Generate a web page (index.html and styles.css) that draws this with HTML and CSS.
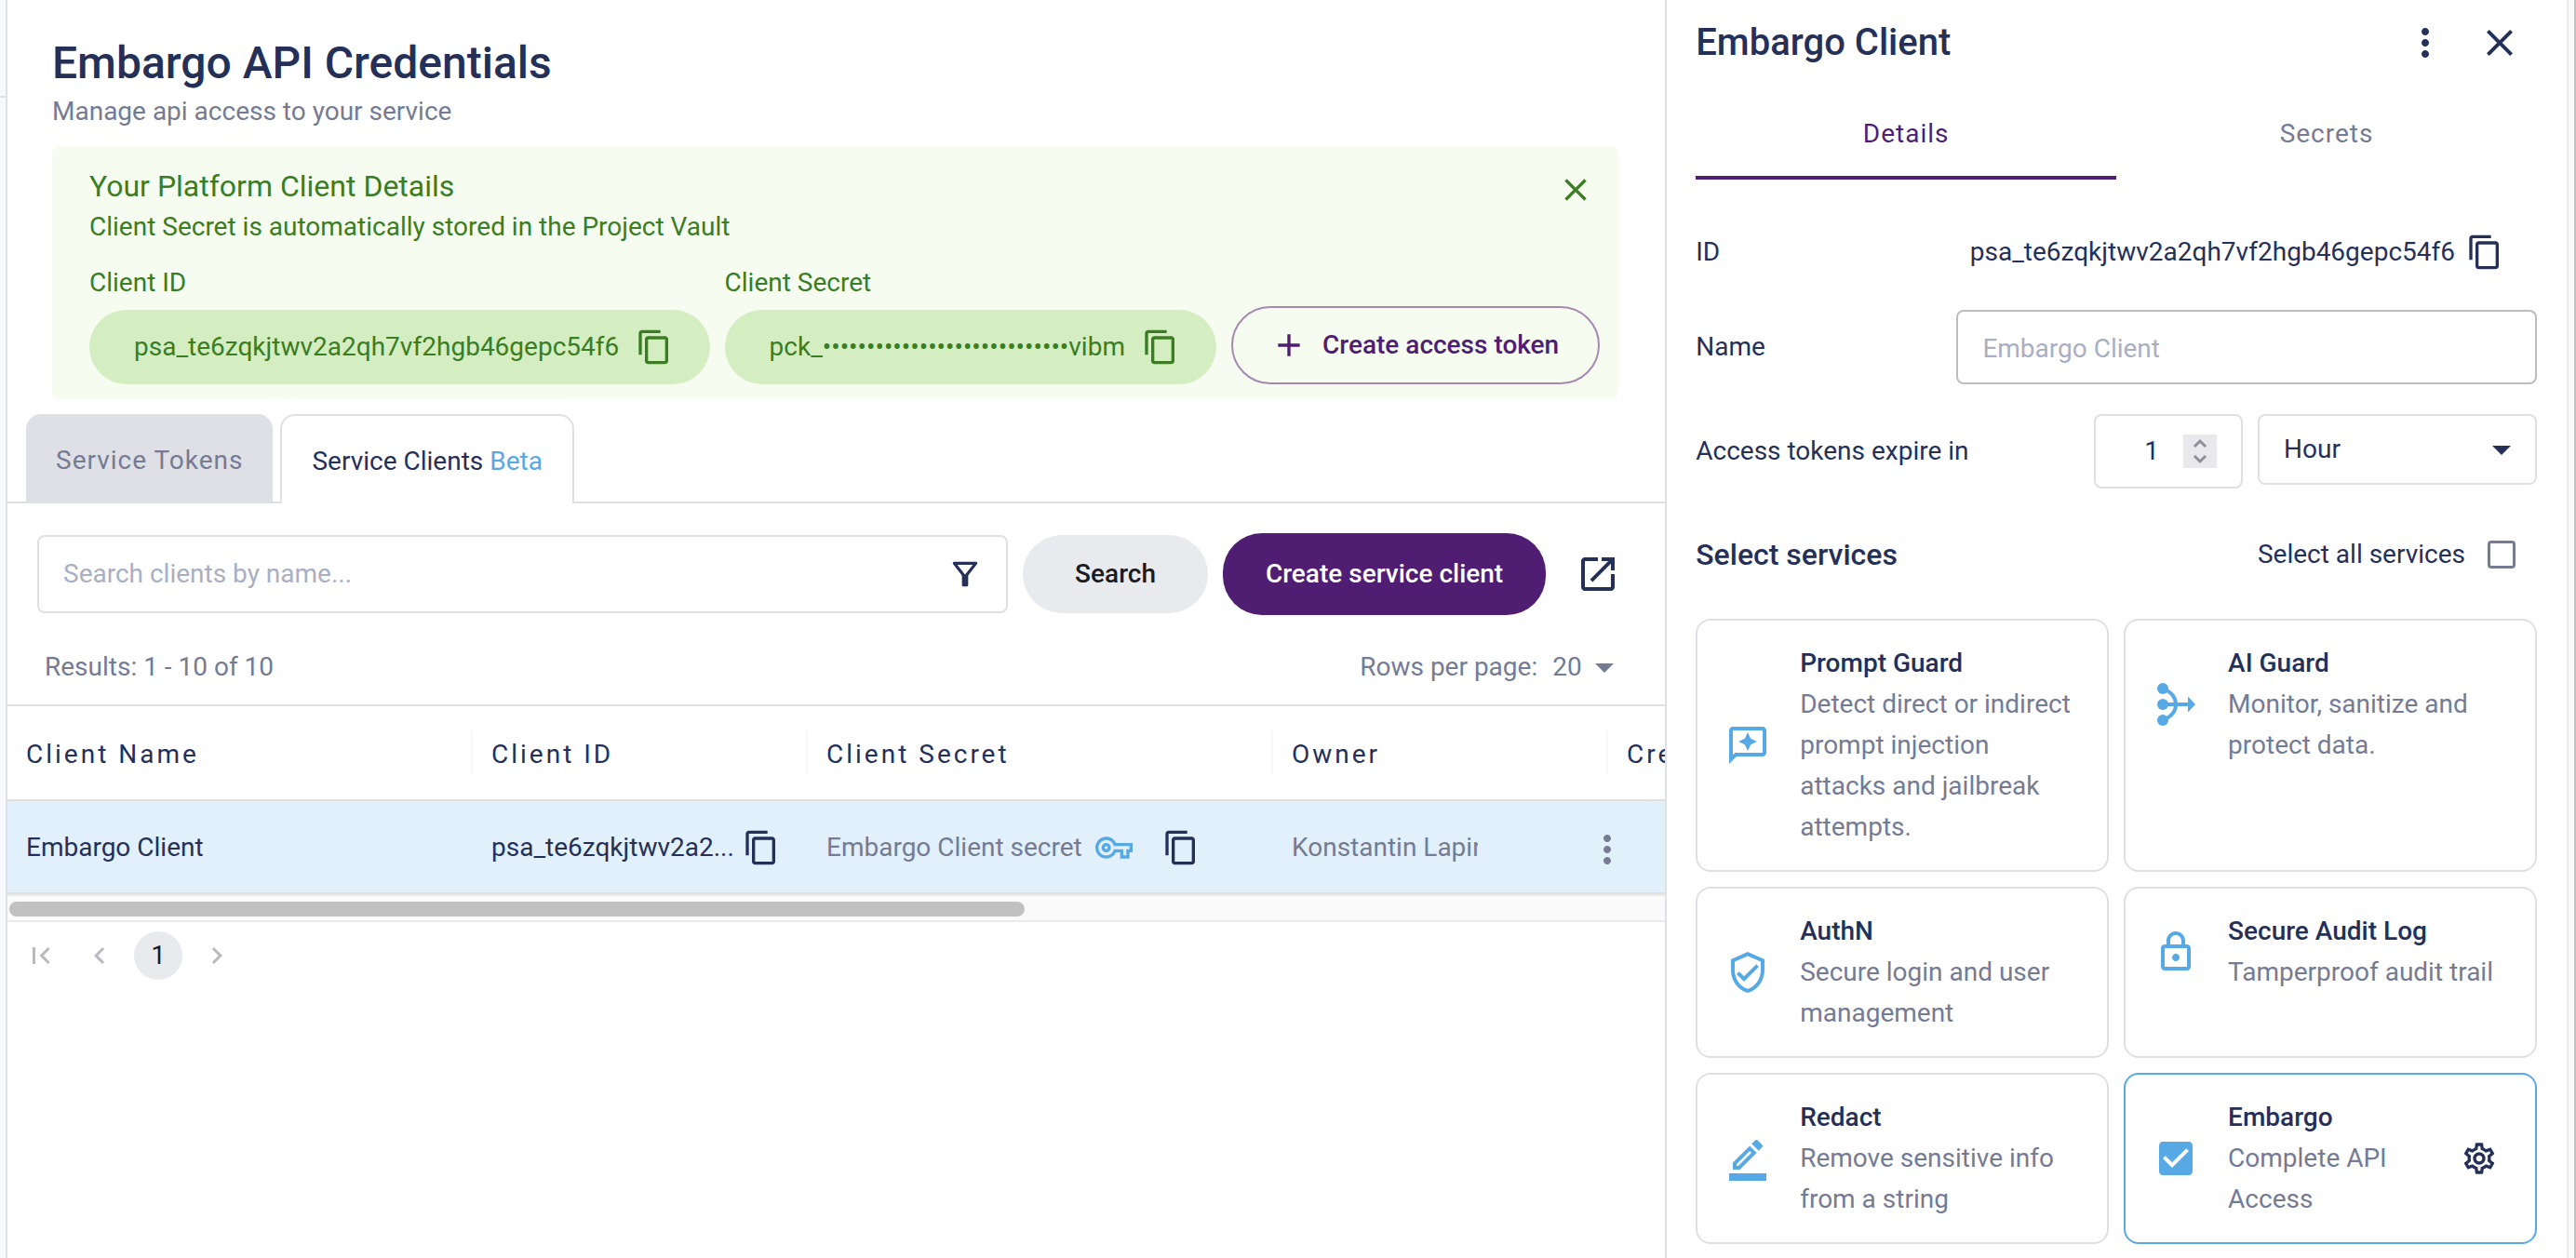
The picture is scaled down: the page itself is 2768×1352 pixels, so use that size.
FILE: index.html
```html
<!DOCTYPE html>
<html lang="en">
<head>
    <meta charset="UTF-8">
    <title>Embargo API Credentials</title>
    <link rel="stylesheet" href="styles.css">
</head>
<body>
<svg class="sprite" aria-hidden="true">
    <symbol id="copy" viewBox="0 0 24 24"><path d="M16 1H4c-1.100 0-2 .9-2 2v14h2V3h12V1zm3 4H8c-1.100 0-2 .9-2 2v14c0 1.100.9 2 2 2h11c1.100 0 2-.9 2-2V7c0-1.100-.9-2-2-2zm0 16H8V7h11v14z"/></symbol>
    <symbol id="close" viewBox="0 0 24 24"><path d="M19 6.410 17.590 5 12 10.590 6.410 5 5 6.410 10.590 12 5 17.590 6.410 19 12 13.410 17.590 19 19 17.590 13.410 12z"/></symbol>
    <symbol id="more" viewBox="0 0 24 24"><path d="M12 8c1.100 0 2-.9 2-2s-.9-2-2-2-2 .9-2 2 .9 2 2 2zm0 2c-1.100 0-2 .9-2 2s.9 2 2 2 2-.9 2-2-.9-2-2-2zm0 6c-1.100 0-2 .9-2 2s.9 2 2 2 2-.9 2-2-.9-2-2-2z"/></symbol>
    <symbol id="drop" viewBox="0 0 24 24"><path d="m7 10 5 5 5-5z"/></symbol>
</svg>

<div class="app">
    <aside class="rail"></aside>

    <main class="main">
        <header class="page-head">
            <h1>Embargo API Credentials</h1>
            <p>Manage api access to your service</p>
        </header>

        <section class="banner">
            <div class="banner-top">
                <div>
                    <h2>Your Platform Client Details</h2>
                    <p>Client Secret is automatically stored in the Project Vault</p>
                </div>
                <button class="icon-btn" aria-label="Close"><svg class="icon"><use href="#close"/></svg></button>
            </div>
            <div class="banner-fields">
                <div class="field">
                    <span class="field-name">Client ID</span>
                    <div class="pill">
                        <span>psa_te6zqkjtwv2a2qh7vf2hgb46gepc54f6</span>
                        <button class="icon-btn" aria-label="Copy client ID"><svg class="icon"><use href="#copy"/></svg></button>
                    </div>
                </div>
                <div class="field field-secret">
                    <span class="field-name">Client Secret</span>
                    <div class="pill">
                        <span>pck_••••••••••••••••••••••••••••vibm</span>
                        <button class="icon-btn" aria-label="Copy client secret"><svg class="icon"><use href="#copy"/></svg></button>
                    </div>
                </div>
                <button class="btn btn-outline">
                    <svg class="icon" viewBox="0 0 24 24"><path d="M19 13h-6v6h-2v-6H5v-2h6V5h2v6h6v2z"/></svg>
                    Create access token
                </button>
            </div>
        </section>

        <nav class="tabs">
            <button class="tab">Service Tokens</button>
            <button class="tab tab-active">Service Clients <span class="beta">Beta</span></button>
        </nav>

        <div class="toolbar">
            <div class="search">
                <input type="text" placeholder="Search clients by name..." aria-label="Search clients by name">
                <button class="icon-btn" aria-label="Filter">
                    <svg class="icon" viewBox="0 0 24 24"><path d="M7 6h10l-5.010 6.300L7 6zm-2.750-.390C6.270 8.200 10 13 10 13v6c0 .550.450 1 1 1h2c.550 0 1-.450 1-1v-6s3.720-4.800 5.740-7.390A.998.998 0 0 0 18.950 4H5.040c-.830 0-1.300.950-.790 1.610z"/></svg>
                </button>
            </div>
            <button class="btn btn-grey">Search</button>
            <button class="btn btn-primary">Create service client</button>
            <button class="icon-btn open-btn" aria-label="Open docs">
                <svg class="icon icon-lg" viewBox="0 0 24 24"><path d="M19 19H5V5h7V3H5c-1.110 0-2 .9-2 2v14c0 1.100.890 2 2 2h14c1.100 0 2-.9 2-2v-7h-2v7zM14 3v2h3.590l-9.830 9.830 1.410 1.410L19 6.410V10h2V3h-7z"/></svg>
            </button>
        </div>

        <div class="results">
            <span>Results: 1 - 10 of 10</span>
            <label class="rows">Rows per page:
                <span class="rows-select">
                    <select><option>20</option></select>
                    <svg class="icon icon-lg"><use href="#drop"/></svg>
                </span>
            </label>
        </div>

        <div class="grid">
            <table>
                <colgroup>
                    <col class="col-name"><col class="col-id"><col class="col-secret"><col class="col-owner"><col class="col-created">
                </colgroup>
                <thead>
                <tr>
                    <th><div>Client Name</div></th>
                    <th><div>Client ID</div></th>
                    <th><div>Client Secret</div></th>
                    <th><div>Owner</div></th>
                    <th><div>Created</div></th>
                </tr>
                </thead>
                <tbody>
                <tr>
                    <td class="dark">Embargo Client</td>
                    <td class="dark">
                        <div class="cell">
                            <span class="cell-id">psa_te6zqkjtwv2a2...</span>
                            <button class="icon-btn" aria-label="Copy"><svg class="icon"><use href="#copy"/></svg></button>
                        </div>
                    </td>
                    <td>
                        <div class="cell">
                            <span>Embargo Client secret</span>
                            <svg class="icon icon-key" viewBox="0 0 24 24"><path d="M22 19h-6v-4h-2.680c-1.140 2.420-3.600 4-6.320 4-3.860 0-7-3.140-7-7s3.140-7 7-7c2.720 0 5.170 1.580 6.320 4H24v6h-2v4zm-4-2h2v-4h2v-2H11.940l-.230-.670C11.010 8.340 9.110 7 7 7c-2.760 0-5 2.240-5 5s2.240 5 5 5c2.110 0 4.010-1.340 4.710-3.330l.230-.670H18v4zM7 15c-1.650 0-3-1.350-3-3s1.350-3 3-3 3 1.350 3 3-1.350 3-3 3zm0-4c-.550 0-1 .450-1 1s.450 1 1 1 1-.450 1-1-.450-1-1-1z"/></svg>
                            <button class="icon-btn navy" aria-label="Copy secret"><svg class="icon"><use href="#copy"/></svg></button>
                        </div>
                    </td>
                    <td><div class="owner">Konstantin Lapin</div></td>
                    <td></td>
                </tr>
                </tbody>
            </table>
            <button class="icon-btn row-menu" aria-label="Row actions"><svg class="icon icon-lg"><use href="#more"/></svg></button>
        </div>
        <div class="scroll"><div class="scroll-thumb"></div></div>

        <nav class="pager">
            <button aria-label="First page"><svg class="icon pager-icon" viewBox="0 0 24 24"><path d="M18.410 16.590 13.820 12l4.590-4.590L17 6l-6 6 6 6zM6 6h2v12H6z"/></svg></button>
            <button aria-label="Previous page"><svg class="icon pager-icon" viewBox="0 0 24 24"><path d="M15.410 7.410 14 6l-6 6 6 6 1.410-1.410L10.830 12z"/></svg></button>
            <button class="page-num">1</button>
            <button aria-label="Next page"><svg class="icon pager-icon" viewBox="0 0 24 24"><path d="M10 6 8.590 7.410 13.170 12l-4.580 4.590L10 18l6-6z"/></svg></button>
        </nav>
    </main>

    <aside class="drawer">
        <header class="drawer-head">
            <h2>Embargo Client</h2>
            <button class="icon-btn" aria-label="More"><svg class="icon icon-lg"><use href="#more"/></svg></button>
            <button class="icon-btn" aria-label="Close panel"><svg class="icon icon-lg"><use href="#close"/></svg></button>
        </header>

        <nav class="drawer-tabs">
            <button class="drawer-tab drawer-tab-active">Details</button>
            <button class="drawer-tab">Secrets</button>
        </nav>

        <div class="row row-id">
            <span>ID</span>
            <div class="id-value">
                <span>psa_te6zqkjtwv2a2qh7vf2hgb46gepc54f6</span>
                <button class="icon-btn" aria-label="Copy ID"><svg class="icon"><use href="#copy"/></svg></button>
            </div>
        </div>
        <div class="row">
            <label for="name">Name</label>
            <input class="name-input" id="name" type="text" placeholder="Embargo Client">
        </div>
        <div class="row">
            <label for="expire">Access tokens expire in</label>
            <div class="expire">
                <div class="number">
                    <input id="expire" type="text" inputmode="numeric" value="1">
                    <span class="spinner">
                        <svg viewBox="0 0 36 36"><path d="M12 13l6-6 6 6M12 23l6 6 6-6"/></svg>
                    </span>
                </div>
                <div class="unit">
                    <select aria-label="Unit"><option>Hour</option></select>
                    <svg class="icon icon-lg"><use href="#drop"/></svg>
                </div>
            </div>
        </div>

        <div class="services-head">
            <h3>Select services</h3>
            <label>Select all services <input type="checkbox"></label>
        </div>

        <div class="services">
            <article class="card">
                <div class="card-body">
                    <svg class="icon icon-lg" viewBox="0 0 24 24"><path d="M20 2H4c-1.100 0-2 .9-2 2v18l4-4h14c1.100 0 2-.9 2-2V4c0-1.100-.9-2-2-2zm0 14H5.170L4 17.170V4h16v12zM12 15l1.570-3.430L17 10l-3.430-1.570L12 5l-1.570 3.430L7 10l3.430 1.570z"/></svg>
                    <div class="card-text"><h4>Prompt Guard</h4><p>Detect direct or indirect prompt injection attacks and jailbreak attempts.</p></div>
                </div>
            </article>
            <article class="card">
                <div class="card-body">
                    <svg class="icon icon-lg" viewBox="0 0 24 24"><g fill="none" stroke="currentColor" stroke-width="2"><path d="M5 3.500c5 2 7 5 7 8.500s-2 6.500-7 8.500M5 12h14"/></g><circle cx="5" cy="3.500" r="3"/><circle cx="5" cy="12" r="3"/><circle cx="5" cy="20.500" r="3"/><path d="M18.500 7.700 22.500 12l-4 4.300z"/></svg>
                    <div class="card-text"><h4>AI Guard</h4><p>Monitor, sanitize and protect data.</p></div>
                </div>
            </article>
            <article class="card">
                <div class="card-body">
                    <svg class="icon icon-lg" viewBox="0 0 24 24"><path d="M12 1 3 5v6c0 5.550 3.840 10.740 9 12 5.160-1.260 9-6.450 9-12V5l-9-4zm7 10c0 4.520-2.980 8.690-7 9.930-4.020-1.240-7-5.410-7-9.930V6.300l7-3.110 7 3.110V11zm-11.590.590L6 13l4 4 8-8-1.410-1.420L10 14.170z"/></svg>
                    <div class="card-text"><h4>AuthN</h4><p>Secure login and user management</p></div>
                </div>
            </article>
            <article class="card">
                <div class="card-body">
                    <svg class="icon icon-lg" viewBox="0 0 24 24"><path d="M18 8h-1V6c0-2.760-2.240-5-5-5S7 3.240 7 6v2H6c-1.100 0-2 .9-2 2v10c0 1.100.9 2 2 2h12c1.100 0 2-.9 2-2V10c0-1.100-.9-2-2-2zM9 6c0-1.660 1.340-3 3-3s3 1.340 3 3v2H9V6zm9 14H6V10h12v10zm-6-3c1.100 0 2-.9 2-2s-.9-2-2-2-2 .9-2 2 .9 2 2 2z"/></svg>
                    <div class="card-text"><h4>Secure Audit Log</h4><p>Tamperproof audit trail</p></div>
                </div>
            </article>
            <article class="card">
                <div class="card-body">
                    <svg class="icon icon-lg" viewBox="0 0 24 24"><path d="M16.810 8.940l-3.750-3.750L4 14.250V18h3.750l9.060-9.060zM6 16v-.920l7.060-7.060.920.920L6.920 16H6zM19.710 6.040a.996.996 0 0 0 0-1.410l-2.340-2.340a1 1 0 0 0-1.410 0l-1.830 1.830 3.750 3.750 1.830-1.830zM2 20h20v4H2z"/></svg>
                    <div class="card-text"><h4>Redact</h4><p>Remove sensitive info from a string</p></div>
                </div>
            </article>
            <article class="card card-selected">
                <div class="card-body">
                    <svg class="icon icon-lg" viewBox="0 0 24 24"><path d="M19 3H5c-1.110 0-2 .9-2 2v14c0 1.100.890 2 2 2h14c1.110 0 2-.9 2-2V5c0-1.100-.890-2-2-2zm-9 14-5-5 1.410-1.410L10 14.170l7.590-7.590L19 8l-9 9z"/></svg>
                    <div class="card-text"><h4>Embargo</h4><p>Complete API Access</p></div>
                    <button class="icon-btn gear" aria-label="Service settings">
                        <svg class="icon" viewBox="0 0 24 24"><path d="M19.430 12.980c.040-.320.070-.640.070-.980s-.030-.660-.070-.980l2.110-1.650c.190-.150.240-.420.120-.640l-2-3.460c-.090-.160-.260-.250-.440-.250-.060 0-.120.010-.170.030l-2.490 1c-.520-.400-1.080-.730-1.690-.980l-.380-2.650C14.460 2.180 14.250 2 14 2h-4c-.250 0-.460.180-.490.420l-.380 2.650c-.610.250-1.170.590-1.690.980l-2.490-1c-.060-.020-.120-.030-.180-.030-.170 0-.340.090-.430.250l-2 3.460c-.130.220-.070.490.120.640l2.110 1.650c-.040.320-.070.650-.070.980s.030.660.070.980l-2.110 1.650c-.190.150-.240.420-.120.640l2 3.460c.090.160.260.250.440.250.060 0 .120-.010.170-.030l2.490-1c.520.400 1.080.730 1.690.980l.380 2.650c.030.240.240.420.490.420h4c.250 0 .460-.180.490-.420l.380-2.650c.610-.250 1.170-.590 1.690-.980l2.490 1c.060.020.120.030.180.030.170 0 .340-.090.430-.250l2-3.460c.120-.220.070-.490-.120-.640l-2.110-1.650zm-1.980-1.710c.040.310.050.520.050.730s-.020.430-.050.730l-.140 1.130.890.700 1.080.840-.700 1.210-1.270-.510-1.040-.420-.900.680c-.430.320-.840.560-1.250.730l-1.060.430-.160 1.130-.200 1.350h-1.400l-.190-1.350-.160-1.130-1.060-.430c-.430-.180-.830-.410-1.230-.710l-.910-.700-1.060.430-1.270.510-.700-1.210 1.080-.840.890-.700-.140-1.130c-.030-.310-.050-.540-.050-.740s.020-.430.050-.730l.140-1.130-.890-.700-1.080-.840.700-1.210 1.270.510 1.040.420.900-.680c.430-.320.840-.560 1.250-.730l1.060-.430.160-1.130.200-1.350h1.390l.190 1.350.160 1.130 1.060.430c.430.180.830.410 1.230.710l.910.700 1.060-.430 1.270-.510.700 1.210-1.070.850-.890.700.140 1.130zM12 8c-2.210 0-4 1.790-4 4s1.790 4 4 4 4-1.790 4-4-1.790-4-4-4zm0 6c-1.100 0-2-.900-2-2s.900-2 2-2 2 .900 2 2-.900 2-2 2z"/></svg>
                    </button>
                </div>
            </article>
        </div>
    </aside>
    <div class="page-scroll"></div>
</div>
</body>
</html>
```
FILE: styles.css
```css
:root {
    --navy: #253058;
    --grey: #747b93;
    --placeholder: #a9afc3;
    --border: #dfe0e5;
    --green: #3a7d22;
    --green-bg: #f6fcf0;
    --green-pill: #d4eec1;
    --purple: #4f1d71;
    --blue: #56a9e5;
}

* {
    box-sizing: border-box;
}

body {
    margin: 0;
    font-family: Roboto, 'Liberation Sans', sans-serif;
    font-size: 28px;
    line-height: 44px;
    color: var(--navy);
    background: #fff;
}

h1, h2, h3, h4, p {
    margin: 0;
    font-weight: 500;
}

h4 {
    font-size: 28px;
}

p {
    font-weight: 400;
}

button, input, select {
    font: inherit;
    color: inherit;
}

button {
    border: 0;
    padding: 0;
    background: none;
    cursor: pointer;
}

.sprite {
    display: none;
}

.icon {
    display: block;
    flex: none;
    width: 40px;
    height: 40px;
    fill: currentColor;
}

.icon-lg {
    width: 48px;
    height: 48px;
}

.icon-btn {
    flex: none;
}

.app {
    display: flex;
    min-height: 100vh;
    overflow: hidden;
}

/* left rail */
.rail {
    flex: none;
    width: 8px;
    background: #f8f9fc;
    border-right: 2px solid var(--border);
}

.rail::before {
    content: "";
    display: block;
    height: 103px;
    border-bottom: 2px solid var(--border);
}

.main {
    flex: 1;
    min-width: 0;
}

.page-head {
    padding: 38px 48px 15px;
}

.page-head h1 {
    font-size: 48px;
    line-height: 60px;
}

.page-head p {
    color: var(--grey);
}

/* green banner */
.banner {
    margin: 0 50px 16px 48px;
    padding: 21px 20px 16px 40px;
    border-radius: 8px;
    background: var(--green-bg);
    color: var(--green);
}

.banner-top {
    display: flex;
    justify-content: space-between;
    align-items: flex-start;
    margin-bottom: 16px;
}

.banner-top .icon-btn {
    padding: 6px;
}

.banner h2 {
    font-size: 32px;
    font-weight: 400;
}

.banner-fields {
    display: flex;
    align-items: flex-end;
    gap: 16px;
}

.field {
    flex: 666 1 0;
    min-width: 0;
}

.field-secret {
    flex-grow: 528;
}

.field-name {
    display: block;
    margin-bottom: 7px;
}

.pill {
    display: flex;
    align-items: center;
    justify-content: space-between;
    height: 80px;
    padding: 0 40px 0 48px;
    border-radius: 40px;
    background: var(--green-pill);
    white-space: nowrap;
}

.btn {
    display: flex;
    flex: none;
    align-items: center;
    height: 84px;
    border-radius: 42px;
    font-weight: 500;
    white-space: nowrap;
}

.btn-outline {
    gap: 16px;
    padding: 0 42px 0 40px;
    border: 2px solid #a48ab2;
    color: var(--purple);
}

.btn-grey {
    padding: 0 56px;
    background: #e9eaee;
    color: #1b1b1f;
}

.btn-primary {
    height: 88px;
    padding: 0 46px;
    background: var(--purple);
    color: #fff;
}

/* tabs */
.tabs {
    display: flex;
    gap: 8px;
    padding-left: 20px;
    border-bottom: 2px solid var(--border);
}

.tab {
    height: 96px;
    margin-bottom: -2px;
    padding: 4px 32px 0;
    border-radius: 16px 16px 0 0;
    background: var(--border);
    color: var(--grey);
    letter-spacing: 1px;
}

.tab-active {
    border: 2px solid var(--border);
    border-bottom: 0;
    background: #fff;
    color: var(--navy);
    letter-spacing: normal;
}

.beta {
    color: var(--blue);
}

/* search toolbar */
.toolbar {
    display: flex;
    align-items: center;
    gap: 16px;
    padding: 32px 48px 0 32px;
}

.search {
    display: flex;
    flex: 1;
    align-items: center;
    height: 84px;
    padding: 0 24px 0 26px;
    border: 2px solid var(--border);
    border-radius: 8px;
}

.search input {
    flex: 1;
    min-width: 0;
    padding: 0;
    border: 0;
    outline: 0;
}

::placeholder {
    color: var(--placeholder);
    opacity: 1;
}

.open-btn {
    margin-left: 16px;
}

.results {
    display: flex;
    align-items: center;
    justify-content: space-between;
    padding: 32px 41px 16px 40px;
    color: var(--grey);
}

.rows, .rows-select {
    display: flex;
    align-items: center;
}

.rows {
    gap: 16px;
}

select {
    appearance: none;
    border: 0;
    padding: 0;
    background: none;
    outline: 0;
}

/* data grid */
.grid {
    position: relative;
    overflow: hidden;
}

table {
    width: 2000px;
    border-collapse: collapse;
    table-layout: fixed;
}

.col-name, .col-secret {
    width: 500px;
}

.col-id, .col-owner {
    width: 360px;
}

th {
    height: 102px;
    padding: 0;
    border-top: 2px solid #e0e0e0;
    border-bottom: 2px solid #e0e0e0;
    text-align: left;
    font-weight: 400;
    letter-spacing: 3px;
}

th div {
    padding: 4px 20px 0;
    border-right: 2px solid #f7f7f8;
}

td {
    height: 100px;
    padding: 2px 20px 0;
    border-bottom: 2px solid #e0e0e0;
    background: #e2f0fb;
    color: var(--grey);
    white-space: nowrap;
}

.dark, .navy {
    color: var(--navy);
}

.cell {
    display: flex;
    align-items: center;
    gap: 14px;
}

.cell-id {
    width: 256px;
}

.icon-key {
    margin-right: 18px;
    color: var(--blue);
}

.owner {
    width: 200px;
    overflow: hidden;
}

.row-menu {
    position: absolute;
    right: 38px;
    bottom: 24px;
    color: var(--grey);
}

.scroll {
    padding: 6px 2px 4px;
    border-top: 2px solid #ebebeb;
    border-bottom: 2px solid #ebebeb;
    background: #fafafa;
}

.scroll-thumb {
    width: 61.4%;
    height: 16px;
    border-radius: 8px;
    background: #c1c1c1;
}

.pager {
    display: flex;
    align-items: center;
    gap: 11px;
    padding: 10px;
    color: #b9bac0;
}

.pager button {
    width: 52px;
    height: 52px;
}

.pager-icon {
    width: 36px;
    height: 36px;
    margin: 0 auto;
}

.page-num {
    border-radius: 50%;
    background: #e9eaee;
    color: #1b1b1f;
}

/* client drawer */
.drawer {
    flex: none;
    width: 35%;
    padding: 0 32px 14px 31px;
    border-left: 2px solid var(--border);
    background: #fff;
}

.drawer-head {
    display: flex;
    align-items: center;
    gap: 32px;
    height: 92px;
    padding-right: 16px;
}

.drawer-head h2 {
    flex: 1;
    font-size: 40px;
}

.drawer-tabs {
    display: flex;
}

.drawer-tab {
    flex: 1;
    height: 101px;
    padding-top: 6px;
    border-bottom: 4px solid transparent;
    color: var(--grey);
    letter-spacing: 1px;
}

.drawer-tab-active {
    border-color: var(--purple);
    color: var(--purple);
}

.row {
    display: flex;
    align-items: center;
    justify-content: space-between;
    margin-bottom: 32px;
}

.row-id {
    margin: 56px 0 40px;
    padding-right: 36px;
}

.id-value {
    display: flex;
    align-items: center;
    gap: 12px;
}

.name-input {
    width: 69%;
    height: 80px;
    padding: 2px 26px 0;
    border: 2px solid #bdbdbd;
    border-radius: 8px;
    outline: 0;
}

.expire {
    display: flex;
    align-items: flex-start;
    gap: 16px;
}

.number, .unit {
    display: flex;
    align-items: center;
    height: 80px;
    border: 2px solid var(--border);
    border-radius: 8px;
}

.number {
    width: 160px;
    padding-right: 26px;
}

.number input {
    flex: 1;
    width: 0;
    padding: 0 26px 0 0;
    border: 0;
    outline: 0;
    text-align: right;
}

.spinner {
    width: 36px;
    height: 36px;
    background: #e9e8ed;
}

.spinner svg {
    display: block;
    fill: none;
    stroke: #8f8f98;
    stroke-width: 3;
}

.unit {
    width: 300px;
    height: 76px;
    padding: 0 12px 0 26px;
}

.unit select {
    flex: 1;
}

.services-head {
    display: flex;
    align-items: center;
    justify-content: space-between;
    margin: 49px 0 47px;
    padding-right: 23px;
}

.services-head h3 {
    font-size: 32px;
}

.services-head label {
    display: flex;
    align-items: center;
    gap: 24px;
}

.services-head input {
    appearance: none;
    width: 30px;
    height: 30px;
    margin: 0;
    border: 3px solid var(--grey);
    border-radius: 4px;
}

.services {
    display: grid;
    grid-template-columns: 1fr 1fr;
    gap: 16px;
}

.card {
    padding: 24px 32px 24px 30px;
    border: 2px solid var(--border);
    border-radius: 16px;
}

.card-selected {
    border-color: var(--blue);
}

.card-body {
    display: flex;
    align-items: center;
    gap: 32px;
    color: var(--blue);
}

.card-text {
    flex: 1;
    min-width: 0;
}

.card h4 {
    color: var(--navy);
}

.card p {
    color: var(--grey);
}

.gear {
    margin-right: 8px;
    color: var(--navy);
}

/* page scrollbar */
.page-scroll {
    flex: none;
    width: 10px;
    border-left: 2px solid #ebebeb;
    border-right: 2px solid #c1c1c1;
    background: #fafafa;
}
```
